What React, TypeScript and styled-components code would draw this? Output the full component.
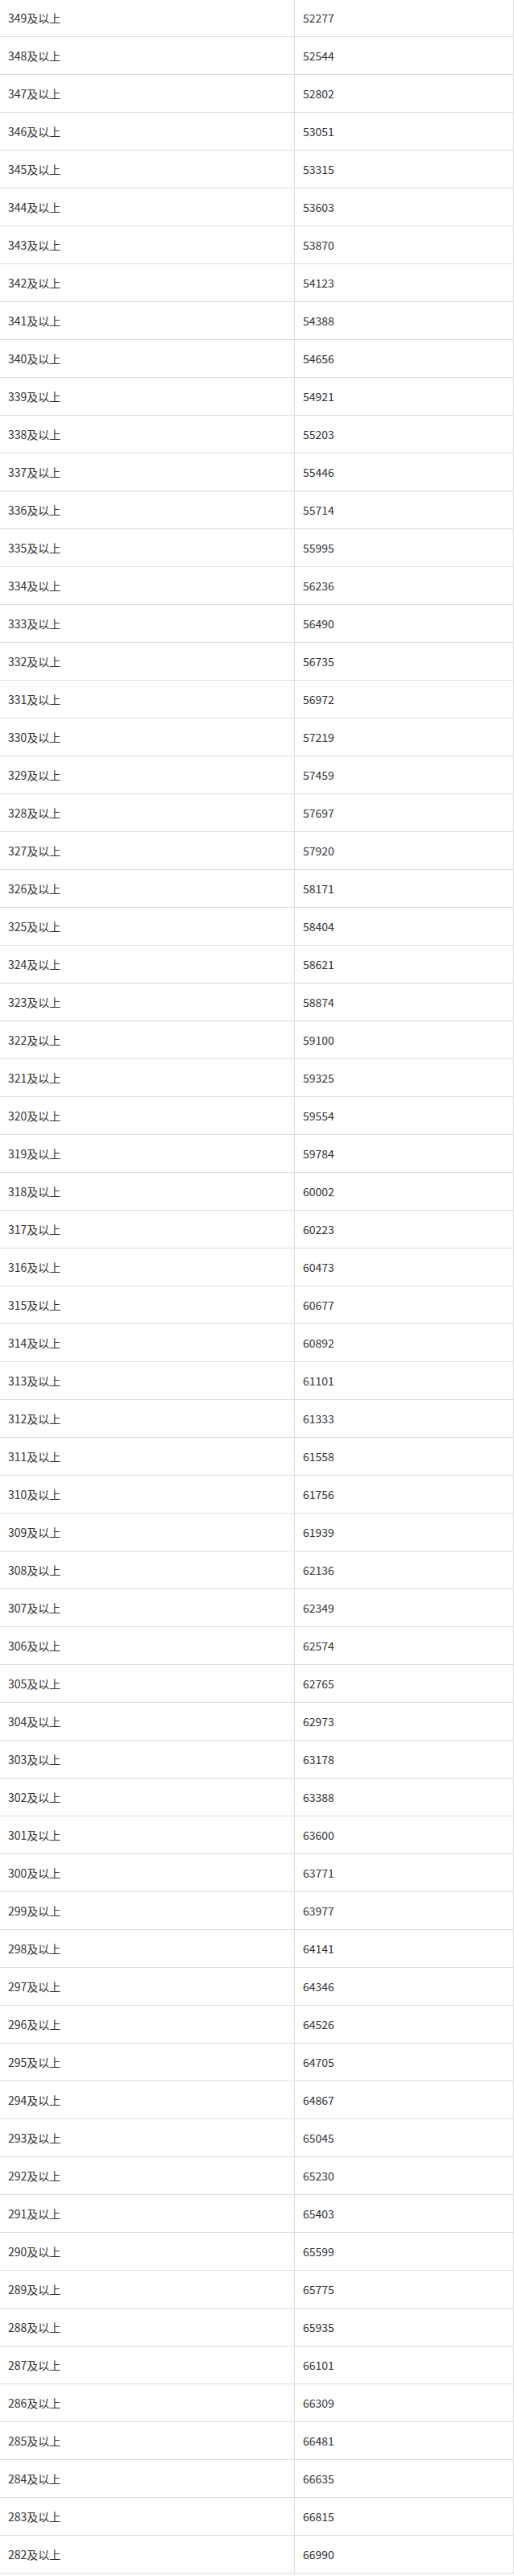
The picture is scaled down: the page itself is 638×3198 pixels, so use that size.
import React from "react";
import styled, { createGlobalStyle } from "styled-components";

const GlobalStyle = createGlobalStyle`
  html, body {
    margin: 0;
    padding: 0;
    background: #fff;
  }
  body {
    font-family: "Noto Sans CJK SC", "Noto Sans", sans-serif;
    color: #333;
  }
`;

const Page = styled.div`
  width: 638px;
  overflow: hidden;
`;

const Table = styled.table`
  border-collapse: collapse;
  width: 638px;
  margin: -2px 0 0 -1px;
  table-layout: fixed;
`;

const Col = styled.col<{ $w: number }>`
  width: ${(p) => p.$w}px;
`;

const Row = styled.tr`
  height: 47px;
`;

const Cell = styled.td`
  padding: 0 10px;
  border: 1px solid #ddd;
  font-size: 14px;
  line-height: 20px;
  color: #333;
  vertical-align: middle;
  white-space: nowrap;
`;

const counts = [
  52277, 52544, 52802, 53051, 53315, 53603, 53870, 54123, 54388, 54656,
  54921, 55203, 55446, 55714, 55995, 56236, 56490, 56735, 56972, 57219,
  57459, 57697, 57920, 58171, 58404, 58621, 58874, 59100, 59325, 59554,
  59784, 60002, 60223, 60473, 60677, 60892, 61101, 61333, 61558, 61756,
  61939, 62136, 62349, 62574, 62765, 62973, 63178, 63388, 63600, 63771,
  63977, 64141, 64346, 64526, 64705, 64867, 65045, 65230, 65403, 65599,
  65775, 65935, 66101, 66309, 66481, 66635, 66815, 66990,
];

const rows = counts.map((n, i) => ({ score: 349 - i, count: n }));

const App: React.FC = () => {
  return (
    <Page>
      <GlobalStyle />
      <Table>
        <colgroup>
          <Col $w={366} />
          <Col $w={272} />
        </colgroup>
        <tbody>
          {rows.map((r) => (
            <Row key={r.score}>
              <Cell>{r.score}及以上</Cell>
              <Cell>{r.count}</Cell>
            </Row>
          ))}
        </tbody>
      </Table>
    </Page>
  );
};

export default App;
